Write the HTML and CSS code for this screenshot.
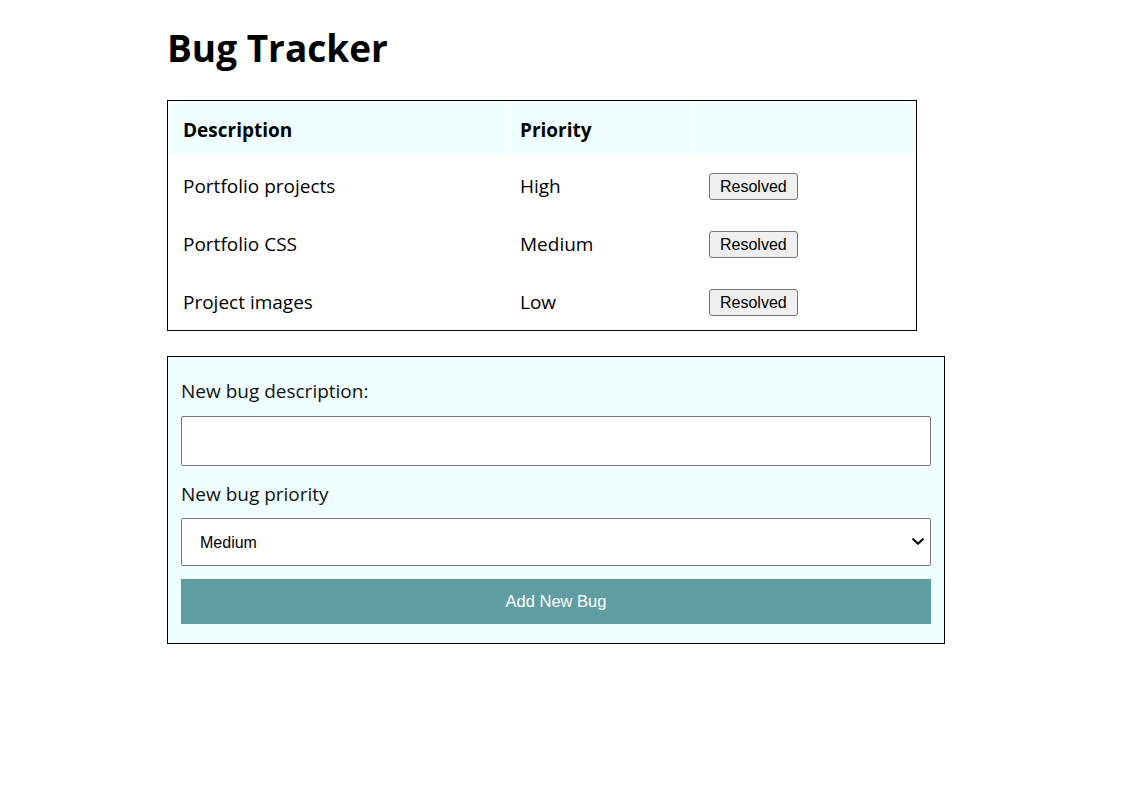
FILE: index.html
```html
<!DOCTYPE html>
<html lang="en">
<head>
<meta charset="utf-8">
<title>Bug Tracker</title>
<link rel="stylesheet" href="styles.css">
</head>
<body>
<main class="page">
  <h1 class="title">Bug Tracker</h1>
  <table class="bugs">
    <colgroup>
      <col class="col-desc">
      <col class="col-prio">
      <col class="col-act">
    </colgroup>
    <thead>
      <tr>
        <th>Description</th>
        <th>Priority</th>
        <th></th>
      </tr>
    </thead>
    <tbody>
      <tr>
        <td>Portfolio projects</td>
        <td>High</td>
        <td><button class="resolve" type="button">Resolved</button></td>
      </tr>
      <tr>
        <td>Portfolio CSS</td>
        <td>Medium</td>
        <td><button class="resolve" type="button">Resolved</button></td>
      </tr>
      <tr>
        <td>Project images</td>
        <td>Low</td>
        <td><button class="resolve" type="button">Resolved</button></td>
      </tr>
    </tbody>
  </table>
  <form class="new-bug">
    <label class="label label-first" for="desc">New bug description:</label>
    <input class="field text-field" id="desc" type="text">
    <label class="label label-second" for="prio">New bug priority</label>
    <div class="select-wrap">
      <select class="field select-field" id="prio">
        <option>High</option>
        <option selected>Medium</option>
        <option>Low</option>
      </select>
      <svg class="chevron" width="12" height="8" viewBox="0 0 12 8" aria-hidden="true">
        <path d="M1.2 1.2 L6 5.8 L10.8 1.2" fill="none" stroke="#111" stroke-width="2.2" stroke-linecap="round" stroke-linejoin="round"/>
      </svg>
    </div>
    <button class="add" type="button">Add New Bug</button>
  </form>
</main>
</body>
</html>
```

FILE: styles.css
```css
html, body {
  margin: 0;
  padding: 0;
  background: #ffffff;
}

body {
  font-family: "Open Sans", "Noto Sans", sans-serif;
  color: #000;
}

.page {
  padding: 0 0 40px 167px;
  display: flex;
  flex-direction: column;
  align-items: flex-start;
}

.title {
  font-size: 37px;
  font-weight: 700;
  line-height: 54px;
  margin: 21px 0 25px 0;
}

.bugs {
  width: 750px;
  table-layout: fixed;
  border: 1px solid #000;
  border-spacing: 2px;
  font-size: 19px;
  background: #fff;
}

.col-desc { width: 335px; }
.col-prio { width: 187px; }
.col-act { width: 218px; }

.bugs th {
  box-sizing: border-box;
  height: 51px;
  background: #f0ffff;
  text-align: left;
  font-weight: 700;
  padding: 2px 13px 0;
  line-height: 26px;
  vertical-align: middle;
}

.bugs td {
  box-sizing: border-box;
  height: 56px;
  padding: 4px 13px 0;
  line-height: 26px;
  vertical-align: middle;
}

.resolve {
  display: inline-block;
  vertical-align: middle;
  box-sizing: border-box;
  height: 27px;
  font-family: "Liberation Sans", Arial, sans-serif;
  font-size: 16px;
  line-height: 19px;
  padding: 3px 10px;
  border: 1px solid #767676;
  border-radius: 3px;
  background: #efefef;
  color: #000;
}

.new-bug {
  margin-top: 25px;
  width: 750px;
  padding: 13px 13px 19px;
  border: 1px solid #000;
  background: #f0ffff;
  display: flex;
  flex-direction: column;
}

.label {
  font-size: 19px;
  line-height: 24px;
  color: #111;
}

.label-first { margin: 9px 0 13px; }
.label-second { margin: 16px 0 12px; }

.field {
  box-sizing: border-box;
  width: 750px;
  border: 1px solid #767676;
  border-radius: 2px;
  background: #fff;
  font-family: "Liberation Sans", Arial, sans-serif;
  font-size: 16px;
  color: #000;
}

.text-field {
  height: 50px;
  padding: 0 18px;
}

.select-wrap {
  position: relative;
  width: 750px;
  height: 48px;
}

.select-field {
  display: block;
  height: 48px;
  padding: 0 18px;
  appearance: none;
  -webkit-appearance: none;
}

.chevron {
  position: absolute;
  right: 7px;
  top: 20px;
  pointer-events: none;
}

.add {
  margin-top: 13px;
  height: 45px;
  border: none;
  background: #5f9ea0;
  color: #fff;
  font-family: "Liberation Sans", Arial, sans-serif;
  font-size: 16.5px;
}
```
